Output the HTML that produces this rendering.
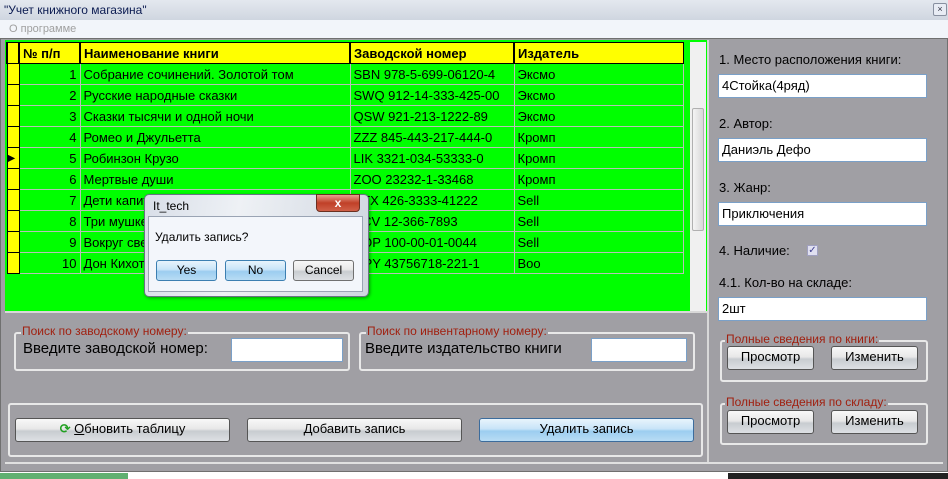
<!DOCTYPE html>
<html><head><meta charset="utf-8"><style>
*{box-sizing:border-box;margin:0;padding:0}
body{width:948px;height:479px;overflow:hidden;background:#fff;font-family:"Liberation Sans","DejaVu Sans",sans-serif;position:relative}
.abs{position:absolute}
.title{left:0;top:0;width:948px;height:20px;background:linear-gradient(#e4e8ef,#cfd6e0);font-size:12px;color:#0a1a50;padding:3px 0 0 4px}
.menu{left:0;top:20px;width:948px;height:20px;background:#f2f5fa;font-size:11px;color:#a0a0a0;padding:3px 0 0 9px}
.main{left:0;top:38px;width:948px;height:434px;background:#a09fa4;border:1px solid #707070}
.grid{left:5px;top:40px;width:703px;height:271px;background:#00ff00}
table{border-collapse:collapse;position:absolute;left:6px;top:42px;font-size:13px}
td{height:21px;border:1px solid #b8c0b8;padding:0 3px;white-space:nowrap;overflow:hidden}
tr.h td{background:#ffff00;font-weight:bold;border:1px solid #000;border-left:2px solid #000}
td.ind{background:#ffff00;width:12px;border:1px solid #000;padding:0}
.inp{background:#fff;border:1px solid #7aa0c8;font-size:13px;padding:3px 3px}
.lbl{font-size:13px;color:#000}
.grp{border:2px solid #e8e8e8;border-radius:3px}
.gt{font-size:12px;color:#a02010;background:#a09fa4;padding:0 1px}
.btn{border:1px solid #555;border-radius:3px;background:linear-gradient(#f8f8f8 0,#e8e8e8 45%,#c8ccd0 55%,#dde0e4 100%);font-size:13px;text-align:center;line-height:20px}
.bb{background:linear-gradient(#e8f4fc 0,#c8e4f8 45%,#9ccdf0 55%,#b8dcf4 100%);border-color:#3c6c9c}
</style></head><body>
<div class="abs title">"Учет книжного магазина"</div>
<div class="abs" style="left:933px;top:3px;width:14px;height:13px;border:1px solid #8890a0;border-radius:2px;background:#e8ecf4;font-size:9px;text-align:center;line-height:11px;color:#334">×</div>
<div class="abs menu">О программе</div>
<div class="abs main"></div>
<div class="abs grid"></div>
<table>
<tr class="h"><td class="ind"></td><td style="width:61px">№ п/п</td><td style="width:270px">Наименование книги</td><td style="width:164px">Заводской номер</td><td style="width:169px">Издатель</td></tr>
<tr><td class="ind"></td><td align="right">1</td><td>Собрание сочинений. Золотой том</td><td>SBN 978-5-699-06120-4</td><td>Эксмо</td></tr>
<tr><td class="ind"></td><td align="right">2</td><td>Русские народные сказки</td><td>SWQ 912-14-333-425-00</td><td>Эксмо</td></tr>
<tr><td class="ind"></td><td align="right">3</td><td>Сказки тысячи и одной ночи</td><td>QSW 921-213-1222-89</td><td>Эксмо</td></tr>
<tr><td class="ind"></td><td align="right">4</td><td>Ромео и Джульетта</td><td>ZZZ 845-443-217-444-0</td><td>Кромп</td></tr>
<tr><td class="ind" style="font-size:10px">▶</td><td align="right">5</td><td>Робинзон Крузо</td><td>LIK 3321-034-53333-0</td><td>Кромп</td></tr>
<tr><td class="ind"></td><td align="right">6</td><td>Мертвые души</td><td>ZOO 23232-1-33468</td><td>Кромп</td></tr>
<tr><td class="ind"></td><td align="right">7</td><td>Дети капитана Гранта</td><td>YTX 426-3333-41222</td><td>Sell</td></tr>
<tr><td class="ind"></td><td align="right">8</td><td>Три мушкетера</td><td>PCV 12-366-7893</td><td>Sell</td></tr>
<tr><td class="ind"></td><td align="right">9</td><td>Вокруг света</td><td>KOP 100-00-01-0044</td><td>Sell</td></tr>
<tr><td class="ind"></td><td align="right">10</td><td>Дон Кихот</td><td>OPY 43756718-221-1</td><td>Boo</td></tr>
</table>
<div class="abs" style="left:690px;top:42px;width:16px;height:269px;background:#f0f0f0"></div>
<div class="abs" style="left:692px;top:108px;width:12px;height:123px;background:linear-gradient(90deg,#f4f4f4,#d8d8d8);border:1px solid #b0b0b0;border-radius:2px"></div>
<div class="abs" style="left:707px;top:40px;width:2px;height:422px;background:#d8d8d8"></div>

<div class="abs lbl" style="left:719px;top:52px">1. Место расположения книги:</div>
<div class="abs inp" style="left:718px;top:74px;width:209px;height:24px">4Стойка(4ряд)</div>
<div class="abs lbl" style="left:719px;top:116px">2. Автор:</div>
<div class="abs inp" style="left:718px;top:138px;width:209px;height:24px">Даниэль Дефо</div>
<div class="abs lbl" style="left:719px;top:180px">3. Жанр:</div>
<div class="abs inp" style="left:718px;top:202px;width:209px;height:24px">Приключения</div>
<div class="abs lbl" style="left:719px;top:243px">4. Наличие:</div>
<div class="abs" style="left:807px;top:245px;width:11px;height:11px;background:#e0e0f0;border:1px solid #a0a0c0;font-size:10px;color:#404090;line-height:9px;text-align:center">✓</div>
<div class="abs lbl" style="left:719px;top:275px">4.1. Кол-во на складе:</div>
<div class="abs inp" style="left:718px;top:297px;width:209px;height:24px">2шт</div>

<div class="abs grp" style="left:720px;top:340px;width:208px;height:42px"></div>
<div class="abs gt" style="left:725px;top:332px">Полные сведения по книги:</div>
<div class="abs btn" style="left:727px;top:346px;width:87px;height:24px">Просмотр</div>
<div class="abs btn" style="left:831px;top:346px;width:87px;height:24px">Изменить</div>
<div class="abs grp" style="left:720px;top:403px;width:208px;height:42px"></div>
<div class="abs gt" style="left:725px;top:395px">Полные сведения по складу:</div>
<div class="abs btn" style="left:727px;top:410px;width:87px;height:24px">Просмотр</div>
<div class="abs btn" style="left:831px;top:410px;width:87px;height:24px">Изменить</div>

<div class="abs" style="left:5px;top:311px;width:702px;height:2px;background:#d8d8d8"></div>
<div class="abs grp" style="left:14px;top:332px;width:336px;height:39px"></div>
<div class="abs gt" style="left:21px;top:324px">Поиск по заводскому номеру:</div>
<div class="abs" style="left:23px;top:340px;font-size:15px">Введите заводской номер:</div>
<div class="abs inp" style="left:231px;top:338px;width:112px;height:24px"></div>
<div class="abs grp" style="left:359px;top:332px;width:336px;height:39px"></div>
<div class="abs gt" style="left:366px;top:324px">Поиск по инвентарному номеру:</div>
<div class="abs" style="left:365px;top:340px;font-size:15px">Введите издательство книги</div>
<div class="abs inp" style="left:591px;top:338px;width:96px;height:24px"></div>

<div class="abs grp" style="left:8px;top:403px;width:695px;height:54px"></div>
<div class="abs btn" style="left:15px;top:418px;width:215px;height:24px"><span style="color:#20a020;font-weight:bold">⟳</span> <u>О</u>бновить таблицу</div>
<div class="abs btn" style="left:247px;top:418px;width:215px;height:24px">Добавить запись</div>
<div class="abs btn bb" style="left:479px;top:418px;width:215px;height:24px">Удалить запись</div>
<div class="abs" style="left:5px;top:462px;width:938px;height:2px;background:#e0e0e0"></div>
<div class="abs" style="left:0;top:473px;width:948px;height:6px;background:#fff"></div>
<div class="abs" style="left:0;top:473px;width:128px;height:6px;background:#60b070"></div>
<div class="abs" style="left:728px;top:473px;width:220px;height:6px;background:#222"></div>

<!-- dialog -->
<div class="abs" style="left:144px;top:194px;width:225px;height:103px;background:linear-gradient(100deg,#d8dee8,#eef1f5 40%,#d0d6e0);border:1px solid #6a7384;border-radius:5px;box-shadow:1px 1px 3px rgba(0,0,0,.4)"></div>
<div class="abs" style="left:153px;top:199px;font-size:12px;color:#000">It_tech</div>
<div class="abs" style="left:316px;top:194px;width:44px;height:18px;border:1px solid #6a3020;border-radius:0 0 4px 4px;background:linear-gradient(#e8a090,#c04028 50%,#d06048);color:#fff;font-weight:bold;text-align:center;font-size:12px;line-height:16px">x</div>
<div class="abs" style="left:148px;top:216px;width:215px;height:76px;background:#f3f6fb;border:1px solid #9aa4b4"></div>
<div class="abs" style="left:155px;top:230px;font-size:12px">Удалить запись?</div>
<div class="abs btn bb" style="left:156px;top:260px;width:61px;height:21px;font-size:12px;line-height:19px;border-color:#3c7fb1">Yes</div>
<div class="abs btn bb" style="left:225px;top:260px;width:61px;height:21px;font-size:12px;line-height:19px;border-color:#3c7fb1">No</div>
<div class="abs btn" style="left:293px;top:260px;width:61px;height:21px;font-size:12px;line-height:19px;border-color:#707070">Cancel</div>
</body></html>
